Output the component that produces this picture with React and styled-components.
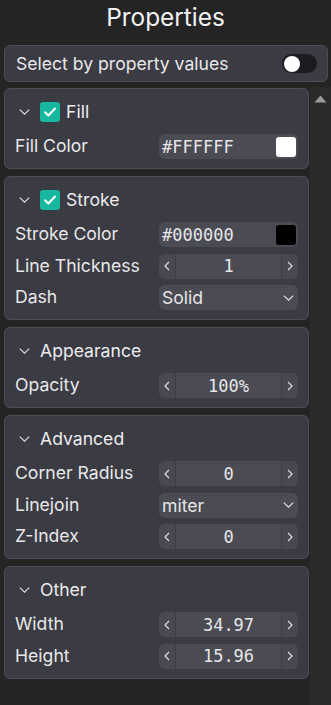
import React from 'react';
import styled, { createGlobalStyle } from 'styled-components';

const GlobalStyle = createGlobalStyle`
  html, body {
    margin: 0;
    padding: 0;
    background: #242424;
  }
  body {
    font-family: Inter, "Noto Sans", sans-serif;
    color: #e8e8ea;
  }
  * { box-sizing: border-box; }
`;

const Page = styled.div`
  width: 331px;
  height: 705px;
  display: flex;
  flex-direction: column;
  overflow: hidden;
`;

const Title = styled.h1`
  margin: 0;
  height: 45px;
  line-height: 34px;
  font-size: 24.4px;
  font-weight: 400;
  text-align: center;
  color: #f2f2f4;
`;

const Card = styled.div`
  background: #3b3b43;
  border: 1px solid #4d4d56;
  border-radius: 6px;
`;

const ToggleCard = styled(Card)`
  margin: 0 3px 0 4px;
  height: 37px;
  display: flex;
  align-items: center;
  justify-content: space-between;
  padding: 0 10px 0 11px;
  font-size: 17.6px;
`;

const Track = styled.div`
  width: 35px;
  height: 19px;
  border-radius: 10px;
  background: #1c1c20;
  display: flex;
  align-items: center;
  padding-left: 2px;
`;

const Knob = styled.div`
  width: 16px;
  height: 16px;
  border-radius: 50%;
  background: #ffffff;
`;

const Body = styled.div`
  flex: 1;
  display: flex;
  margin-top: 5px;
  min-height: 0;
`;

const Content = styled.div`
  flex: 1;
  display: flex;
  flex-direction: column;
  gap: 7px;
  padding: 1px 1px 0 4px;
`;

const ScrollTrack = styled.div`
  width: 21px;
  background: #2b2b2c;
  display: flex;
  justify-content: center;
  padding-top: 8px;
`;

const Section = styled(Card)`
  padding: 12px 10px 9px 10px;
  display: flex;
  flex-direction: column;
  gap: 12px;
`;

const SectionHeader = styled.div`
  height: 21px;
  display: flex;
  align-items: center;
  gap: 6px;
  font-size: 17.6px;
  color: #ececee;
`;

const ChevronBox = styled.span`
  width: 19px;
  display: flex;
  justify-content: center;
`;

const CheckBox = styled.span`
  width: 20px;
  height: 20px;
  border-radius: 3px;
  background: #17b89f;
  display: flex;
  align-items: center;
  justify-content: center;
`;

const Rows = styled.div`
  display: flex;
  flex-direction: column;
  gap: 6.5px;
`;

const Row = styled.div`
  height: 25px;
  display: flex;
  align-items: center;
  justify-content: space-between;
`;

const Label = styled.span`
  font-size: 17.6px;
  color: #e8e8ea;
  position: relative;
  top: -1px;
`;

const Field = styled.div`
  width: 139px;
  height: 25px;
  border-radius: 6px;
  background: #4b4b54;
  display: flex;
  align-items: center;
  font-size: 17.6px;
  color: #e6e6e8;
  overflow: hidden;
`;

const ColorField = styled(Field)`
  padding: 0 2px 0 3px;
  justify-content: space-between;
  font-family: "DejaVu Sans Mono", "Liberation Mono", monospace;
  font-size: 17px;
`;

const Swatch = styled.span`
  width: 20px;
  height: 20px;
  border-radius: 3px;
  background: ${p => p.$color};
`;

const SelectField = styled(Field)`
  padding: 0 4px 0 3px;
  justify-content: space-between;
`;

const StepButton = styled.span`
  width: 16px;
  height: 100%;
  display: flex;
  align-items: center;
  justify-content: center;
  background: #484851;
`;

const StepValue = styled.span`
  flex: 1;
  height: 100%;
  display: flex;
  align-items: center;
  justify-content: center;
  border-left: 1px solid #3d3d45;
  border-right: 1px solid #3d3d45;
  font-family: "DejaVu Sans Mono", "Liberation Mono", monospace;
  font-size: 17px;
`;

const Chevron = ({ color = '#d8d8dc' }) => (
  <svg width="11" height="6" viewBox="0 0 11 6">
    <path d="M0.8 0.6 L5.5 5.2 L10.2 0.6" fill="none" stroke={color} strokeWidth="1.2" />
  </svg>
);

const Check = () => (
  <svg width="14" height="12" viewBox="0 0 14 12">
    <path d="M2 6.3 L5.4 9.5 L12 2.5" fill="none" stroke="#ffffff" strokeWidth="2" strokeLinecap="round" strokeLinejoin="round" />
  </svg>
);

const Arrow = ({ dir }) => (
  <svg width="6" height="10" viewBox="0 0 6 10">
    <path d={dir === 'left' ? 'M5 1 L1 5 L5 9' : 'M1 1 L5 5 L1 9'} fill="none" stroke="#dcdce0" strokeWidth="1.2" />
  </svg>
);

const Stepper = ({ value }) => (
  <Field>
    <StepButton><Arrow dir="left" /></StepButton>
    <StepValue>{value}</StepValue>
    <StepButton><Arrow dir="right" /></StepButton>
  </Field>
);

const ColorInput = ({ value, color }) => (
  <ColorField>
    <span>{value}</span>
    <Swatch $color={color} />
  </ColorField>
);

const Select = ({ value }) => (
  <SelectField>
    <span>{value}</span>
    <Chevron color="#e0e0e4" />
  </SelectField>
);

const PanelSection = ({ title, checked, children }) => (
  <Section>
    <SectionHeader>
      <ChevronBox><Chevron /></ChevronBox>
      {checked && <CheckBox><Check /></CheckBox>}
      <span>{title}</span>
    </SectionHeader>
    <Rows>{children}</Rows>
  </Section>
);

const Prop = ({ label, children }) => (
  <Row>
    <Label>{label}</Label>
    {children}
  </Row>
);

export default function App() {
  return (
    <Page>
      <GlobalStyle />
      <Title>Properties</Title>
      <ToggleCard>
        <span>Select by property values</span>
        <Track><Knob /></Track>
      </ToggleCard>
      <Body>
        <Content>
          <PanelSection title="Fill" checked>
            <Prop label="Fill Color"><ColorInput value="#FFFFFF" color="#ffffff" /></Prop>
          </PanelSection>
          <PanelSection title="Stroke" checked>
            <Prop label="Stroke Color"><ColorInput value="#000000" color="#000000" /></Prop>
            <Prop label="Line Thickness"><Stepper value="1" /></Prop>
            <Prop label="Dash"><Select value="Solid" /></Prop>
          </PanelSection>
          <PanelSection title="Appearance">
            <Prop label="Opacity"><Stepper value="100%" /></Prop>
          </PanelSection>
          <PanelSection title="Advanced">
            <Prop label="Corner Radius"><Stepper value="0" /></Prop>
            <Prop label="Linejoin"><Select value="miter" /></Prop>
            <Prop label="Z-Index"><Stepper value="0" /></Prop>
          </PanelSection>
          <PanelSection title="Other">
            <Prop label="Width"><Stepper value="34.97" /></Prop>
            <Prop label="Height"><Stepper value="15.96" /></Prop>
          </PanelSection>
        </Content>
        <ScrollTrack>
          <svg width="13" height="8" viewBox="0 0 13 8">
            <path d="M6.5 0.5 L12.5 7.5 L0.5 7.5 Z" fill="#9a9a9c" />
          </svg>
        </ScrollTrack>
      </Body>
    </Page>
  );
}
